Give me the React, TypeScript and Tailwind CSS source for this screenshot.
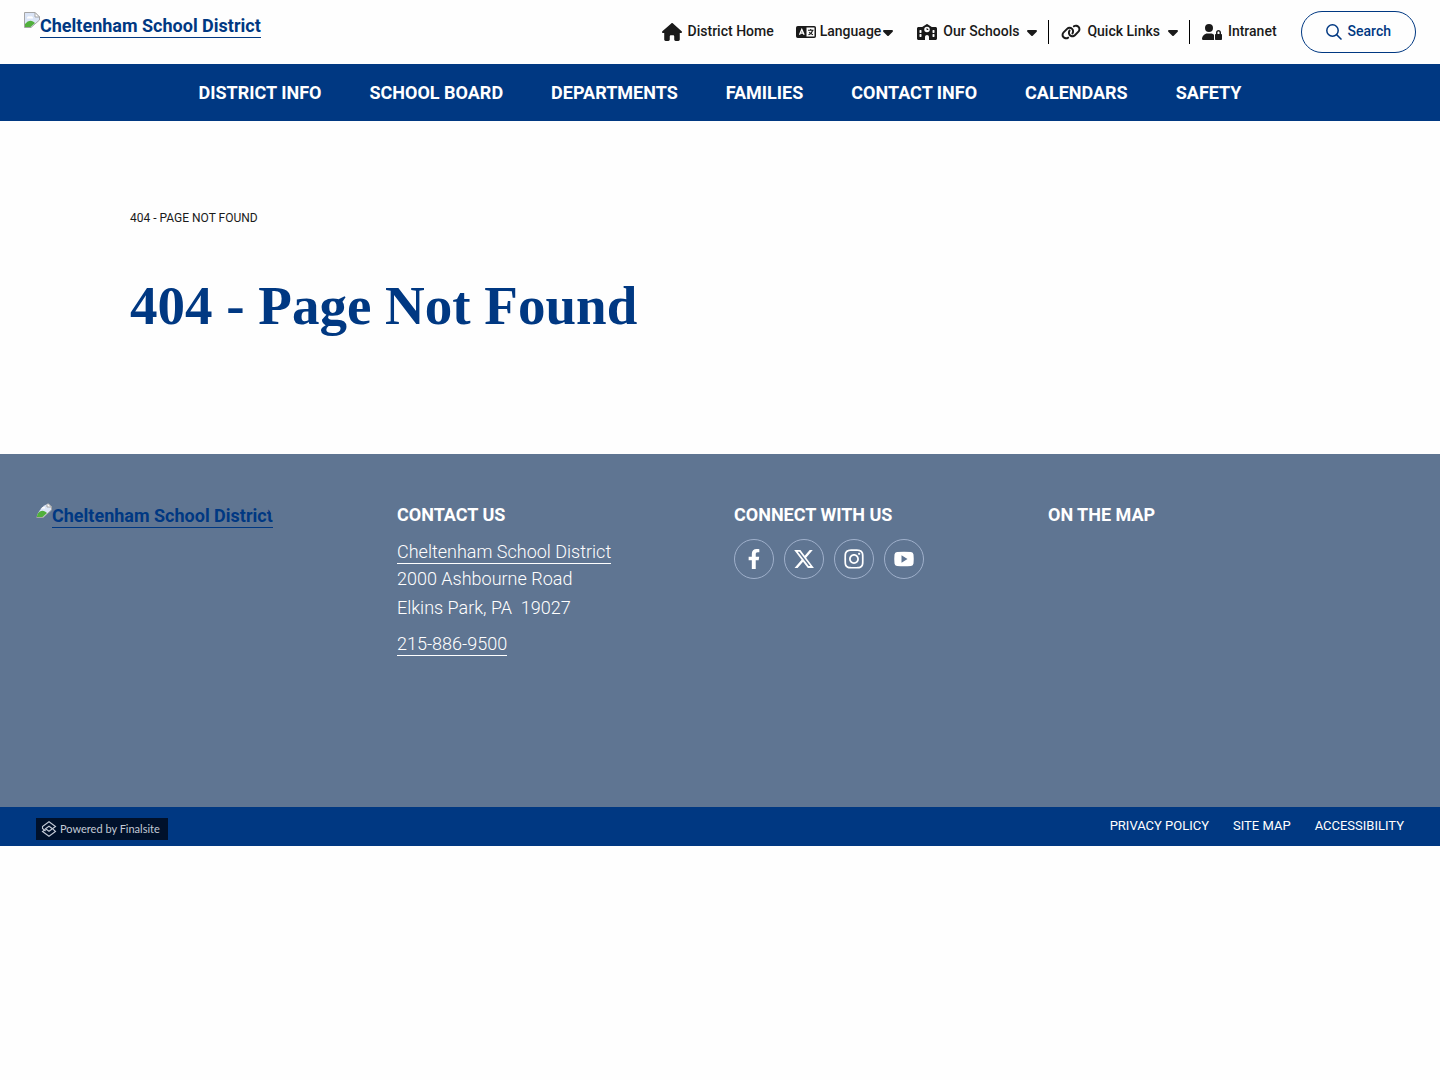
import React from 'react';
import { FaFacebookF } from 'react-icons/fa';
import {
    FaCaretDown,
    FaHouse,
    FaInstagram,
    FaLink,
    FaSchool,
    FaUserLock,
    FaXTwitter,
} from 'react-icons/fa6';

const navItems = [
    'District Info',
    'School Board',
    'Departments',
    'Families',
    'Contact Info',
    'Calendars',
    'Safety',
];

const legalLinks = ['Privacy Policy', 'Site Map', 'Accessibility'];

const MissingImageIcon: React.FC = () => (
    <svg viewBox="0 0 16 16" className="w-4 h-4 shrink-0" aria-hidden="true">
        <path d="M0.5 15.5V0.5H11L15.5 5V8L7 15.5Z" fill="#dbe5f7" stroke="#a5a5a5" />
        <path d="M11 0.5V5H15.5Z" fill="#fff" stroke="#a5a5a5" />
        <path d="M3 6.5a2 2 0 0 1 3-2 2 2 0 0 1 3 2Z" fill="#fff" />
        <path d="M1 15V12Q5 7 9 9.5L11 11L6.5 15Z" fill="#51b03c" />
    </svg>
);

const Logo: React.FC = () => (
    <a href="#" className="flex items-start text-lg leading-[22px] font-bold text-[#003882]">
        <MissingImageIcon />
        <span className="border-b border-current pt-[3px] whitespace-nowrap">Cheltenham School District</span>
    </a>
);

const LanguageIcon: React.FC = () => (
    <svg viewBox="0 0 20 12" className="mr-1 w-5 h-3" fill="none" aria-hidden="true">
        <rect x="0.75" y="0.75" width="18.5" height="10.5" rx="1" stroke="currentColor" strokeWidth="1.5" />
        <path d="M1 1H10.5V11H1Z" fill="currentColor" />
        <path d="M3.5 8.8L5.8 3.4L8.1 8.8M4.3 7.2H7.3" stroke="#fff" strokeWidth="1.3" />
        <path d="M12 4.2H17.5M14.7 3V4.2M16.6 4.4Q15.8 7.6 12.5 8.8M13.2 6Q14.5 8 17 8.8" stroke="currentColor" strokeWidth="1.1" />
    </svg>
);

const SearchIcon: React.FC = () => (
    <svg viewBox="0 0 16 16" className="w-4 h-4" fill="none" stroke="currentColor" strokeWidth="1.5" aria-hidden="true">
        <circle cx="6.5" cy="6.5" r="5.7" />
        <path d="M10.6 10.6L15.5 15.5" />
    </svg>
);

const YoutubeIcon: React.FC = () => (
    <svg viewBox="0 0 20 16" className="w-5 h-4" fill="currentColor" aria-hidden="true">
        <path
            fillRule="evenodd"
            d="M3 1Q10 0.4 17 1Q19.2 1.2 19.5 3.5Q20 8 19.5 12.5Q19.2 14.8 17 15Q10 15.6 3 15Q0.8 14.8 0.5 12.5Q0 8 0.5 3.5Q0.8 1.2 3 1ZM7.5 4.2V11.8L13.5 8Z"
        />
    </svg>
);

const FinalsiteMark: React.FC = () => (
    <svg viewBox="0 0 16 18" className="w-4 h-[18px]" fill="none" stroke="currentColor" strokeWidth="1.1" aria-hidden="true">
        <path d="M4.5 11L1.5 8.5V6.5L8 1.8L14.5 6.5L8 11.2L4.5 8.7L8 6.2L11.5 8.7" />
        <path d="M11.5 8.7L14.5 11.5L8 16.2L1.5 11.5L4.5 9.5" />
    </svg>
);

const socials = [
    { name: 'Facebook', icon: <FaFacebookF className="w-5 h-5" /> },
    { name: 'X', icon: <FaXTwitter className="w-[22px] h-[22px]" /> },
    { name: 'Instagram', icon: <FaInstagram className="w-[22px] h-[22px]" /> },
    { name: 'YouTube', icon: <YoutubeIcon /> },
];

export default function App() {
    return (
        <div className="min-h-screen bg-[#fefefe] font-['Roboto',sans-serif] text-[#1a1a1a]">
            <header>
                <div className="flex h-16 items-start justify-between px-6">
                    <div className="pt-3">
                        <Logo />
                    </div>
                    <div className="flex h-16 items-center text-sm font-medium">
                        <a href="#" className="flex items-center gap-1.5">
                            <FaHouse className="w-5 h-5" />
                            <span className="pb-0.5">District Home</span>
                        </a>
                        <button className="ml-[22px] flex items-center">
                            <LanguageIcon />
                            <span className="pb-0.5">Language</span>
                            <FaCaretDown className="w-3.5 h-4" />
                        </button>
                        <button className="ml-[22px] flex items-center">
                            <FaSchool className="mr-1.5 w-5 h-5" />
                            <span className="pb-0.5">Our Schools</span>
                            <FaCaretDown className="ml-1.5 w-3.5 h-4" />
                        </button>
                        <div className="ml-[9px] h-6 w-px bg-black" />
                        <button className="ml-3 flex items-center">
                            <FaLink className="mr-1.5 w-5 h-5" />
                            <span className="pb-0.5">Quick Links</span>
                            <FaCaretDown className="ml-1.5 w-3.5 h-4" />
                        </button>
                        <div className="ml-[9px] h-6 w-px bg-black" />
                        <a href="#" className="ml-3 flex items-center gap-1.5">
                            <FaUserLock className="w-5 h-5" />
                            <span className="pb-0.5">Intranet</span>
                        </a>
                        <button className="ml-6 flex h-[42px] items-center gap-1.5 rounded-full border border-[#003882] px-6 text-[#003882]">
                            <SearchIcon />
                            <span className="pb-0.5">Search</span>
                        </button>
                    </div>
                </div>
                <nav className="flex h-[57px] items-center justify-center gap-12 bg-[#003882] text-lg font-bold text-white uppercase">
                    {navItems.map((item) => (
                        <a key={item} href="#">{item}</a>
                    ))}
                </nav>
            </header>

            <main className="mx-auto max-w-[1180px] pt-[88px] pb-[115px]">
                <p className="text-xs leading-[18px] uppercase">404 - Page Not Found</p>
                <h1 className="pt-[45px] font-['Liberation_Serif',serif] text-[55px] leading-[67px] font-bold text-[#003882]">
                    404 - Page Not Found
                </h1>
            </main>

            <footer className="text-white">
                <div className="grid min-h-[353px] grid-cols-[361fr_337fr_314fr_356fr] bg-[#5f7592] px-9 pt-12">
                    <div>
                        <div className="w-fit overflow-hidden rounded-t-[20px]">
                            <Logo />
                        </div>
                    </div>
                    <section>
                        <h2 className="text-lg leading-[26px] font-bold uppercase">Contact Us</h2>
                        <div className="mt-3 text-lg leading-[29px] font-light">
                            <a href="#" className="block w-fit border-b border-white leading-[23px]">
                                Cheltenham School District
                            </a>
                            <p>2000 Ashbourne Road</p>
                            <p>Elkins Park, PA&nbsp; 19027</p>
                            <a href="tel:2158869500" className="mt-2.5 block w-fit border-b border-white leading-[23px]">
                                215-886-9500
                            </a>
                        </div>
                    </section>
                    <section>
                        <h2 className="text-lg leading-[26px] font-bold uppercase">Connect With Us</h2>
                        <div className="mt-[11px] flex gap-2.5">
                            {socials.map(({ name, icon }) => (
                                <a
                                    key={name}
                                    href="#"
                                    aria-label={name}
                                    className="flex h-10 w-10 items-center justify-center rounded-full border border-[#9fb0cb]"
                                >
                                    {icon}
                                </a>
                            ))}
                        </div>
                    </section>
                    <section>
                        <h2 className="text-lg leading-[26px] font-bold uppercase">On The Map</h2>
                    </section>
                </div>
                <div className="flex h-[39px] items-start justify-between bg-[#003882] px-9">
                    <a
                        href="#"
                        className="mt-[11px] flex h-[22px] items-center gap-[3px] bg-[#00112b] pr-2 pl-[5px] font-['Lato',sans-serif] text-[11px] text-[#c3cad6]"
                    >
                        <FinalsiteMark />
                        Powered by Finalsite
                    </a>
                    <div className="flex gap-6 pt-2.5 text-[13px] leading-[18px] uppercase">
                        {legalLinks.map((link) => (
                            <a key={link} href="#">{link}</a>
                        ))}
                    </div>
                </div>
            </footer>
        </div>
    );
}
